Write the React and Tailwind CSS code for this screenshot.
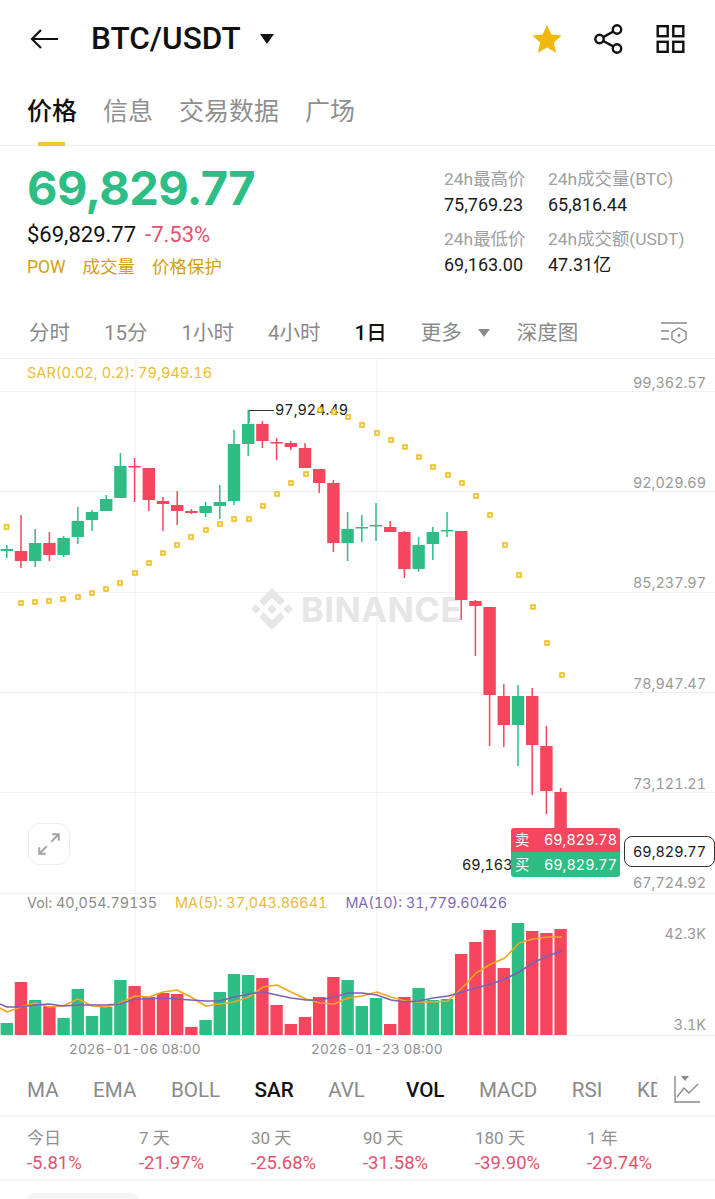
import React from "react";

const FONT = "font-['Roboto','Noto_Sans_CJK_SC',sans-serif]";
const UP = "#2ebd85";
const DOWN = "#f6465d";

// [bodyTop, bodyBottom, wickTop, wickBottom, volTop, up?]
const CANDLES = [
  [549, 551, 545, 558, 1023, 1],
  [551, 561, 515, 568, 982, 0],
  [543, 561, 529, 567, 1000, 1],
  [543, 555, 532, 561, 1006, 0],
  [538, 555, 536, 557, 1018, 1],
  [521, 537, 507, 544, 989, 1],
  [512, 520, 510, 531, 1016, 1],
  [499, 511, 495, 511, 1007, 1],
  [466, 498, 453, 498, 980, 1],
  [466, 467, 458, 502, 986, 0],
  [468, 500, 468, 511, 997, 0],
  [501, 504, 497, 531, 993, 0],
  [505, 511, 491, 525, 994, 0],
  [511, 513, 509, 514, 1027, 0],
  [506, 513, 502, 517, 1020, 1],
  [502, 506, 485, 519, 992, 1],
  [444, 501, 430, 505, 974, 1],
  [424, 444, 410, 456, 975, 1],
  [424, 441, 421, 448, 978, 0],
  [442, 443, 438, 460, 1005, 0],
  [443, 447, 441, 450, 1024, 0],
  [448, 468, 443, 468, 1017, 0],
  [469, 483, 469, 493, 997, 0],
  [483, 543, 480, 552, 977, 0],
  [529, 543, 512, 561, 980, 1],
  [527, 528, 515, 542, 1006, 1],
  [525, 526, 503, 541, 998, 1],
  [527, 532, 521, 532, 1024, 0],
  [532, 569, 531, 578, 997, 0],
  [545, 569, 537, 572, 988, 1],
  [532, 544, 527, 560, 1000, 1],
  [530, 531, 512, 537, 999, 1],
  [531, 600, 531, 620, 954, 0],
  [601, 606, 600, 656, 942, 0],
  [607, 695, 607, 746, 930, 0],
  [696, 725, 684, 747, 968, 0],
  [696, 725, 685, 766, 923, 1],
  [696, 745, 688, 795, 931, 0],
  [746, 791, 726, 814, 933, 0],
  [792, 835, 788, 835, 929, 0],
];

const SAR_DOTS = [
  [6.5, 527], [21, 603], [35, 602], [49, 601], [63, 599], [78, 597], [92, 593], [106, 589],
  [120, 583], [135, 573], [149, 563], [163, 553], [177, 545], [191, 537], [206, 530],
  [220, 524], [234, 519], [249, 519], [263, 506], [277, 494], [291, 483], [306, 474],
  [320, 410], [334, 412], [348, 417], [362, 425], [377, 433], [391, 440], [405, 447],
  [419, 457], [433, 467], [448, 475], [462, 483], [476, 496], [490, 515], [505, 545],
  [519, 575], [533, 607], [547, 643], [562, 675],
];

const MA5 =
  "0,1008 7,1012 21,1007 35,1003 49,1007 63,1006 78,999 92,1006 106,1007 120,1003 135,996 149,997 163,992 177,990 191,997 206,1006 220,1004 234,1002 249,997 263,987 277,985 291,992 306,999 320,1003 334,1004 348,998 362,996 377,992 391,997 405,1001 419,1002 433,1002 448,1001 462,988 476,973 491,964 505,958 519,943 533,939 547,937 562,937";
const MA10 =
  "0,1004 7,1007 21,1007 35,1005 49,1004 63,1006 78,1005 92,1005 106,1005 120,1004 135,999 149,999 163,998 177,999 191,1000 206,1001 220,1001 234,997 249,994 263,992 277,995 291,998 306,1000 320,1000 334,997 348,993 362,993 377,995 391,1000 405,1002 419,1001 433,998 448,996 462,992 476,988 491,984 505,979 519,972 533,963 547,956 562,951";

const GRID_Y = [391, 491, 592, 692, 792, 893, 1035];
const AXIS = [
  ["99,362.57", 388],
  ["92,029.69", 488],
  ["85,237.97", 588],
  ["78,947.47", 689],
  ["73,121.21", 789],
  ["67,724.92", 888],
  ["42.3K", 939],
  ["3.1K", 1030],
];

function Chart() {
  return (
    <svg viewBox="0 359 715 702" className="block w-[715px] h-[702px] font-['Inter',sans-serif] tabular-nums">
      {GRID_Y.map((y) => (
        <line key={y} x1="0" x2="715" y1={y + 0.5} y2={y + 0.5} stroke="#f0f0f0" />
      ))}
      {[135, 377].map((x) => (
        <line key={x} x1={x} x2={x} y1="359" y2="1035" stroke="#f0f0f0" />
      ))}

      {/* watermark */}
      <path
        transform="translate(251 588) scale(1.75)"
        fill="#e6e6e6"
        d="M16.624 13.9202l2.7175 2.7154-7.353 7.353-7.353-7.352 2.7175-2.7164 4.6355 4.6595 4.6356-4.6595zm4.6366-4.6366L24 12l-2.7154 2.7164L18.5682 12l2.6924-2.7164zm-9.272.001l2.7163 2.6914-2.7164 2.7174v-.001L9.2721 12l2.7164-2.7154zm-9.2722-.001L5.4088 12l-2.6914 2.6934L0 12l2.7164-2.7164zM11.9885.0115l7.353 7.329-2.7174 2.7154-4.6356-4.6356-4.6355 4.6595-2.7174-2.7154 7.353-7.353z"
      />
      <text x="301" y="622" fill="#e6e6e6" className="text-[34.5px] font-bold tracking-[0.5px]">
        BINANCE
      </text>

      {/* high marker */}
      <path d="M249 423V410.5H274" fill="none" stroke="#333" strokeWidth="1" />
      <text x="275" y="415" fill="#1a1a1a" className="text-[14.4px]">97,924.49</text>

      {/* candles */}
      {CANDLES.map(([top, bottom, wickTop, wickBottom, , up], i) => {
        const x = 6.8 + 14.2 * i;
        const color = up ? UP : DOWN;
        return (
          <g key={i} fill={color}>
            <rect x={x - 0.75} y={wickTop} width="1.5" height={wickBottom - wickTop} />
            <rect x={x - 6.2} y={top} width="12.4" height={Math.max(bottom - top, 1.5)} />
          </g>
        );
      })}

      {/* SAR dots */}
      {SAR_DOTS.map(([x, y]) => (
        <rect key={x} x={x - 2} y={y - 2} width="4" height="4" fill="#fff6c4" stroke="#efbf1f" strokeWidth="1.6" />
      ))}

      {/* volume */}
      {CANDLES.map(([, , , , volTop, up], i) => (
        <rect
          key={i}
          x={6.8 + 14.2 * i - 6.2}
          y={volTop}
          width="12.4"
          height={1035 - volTop}
          fill={up ? UP : DOWN}
        />
      ))}
      <polyline points={MA5} fill="none" stroke="#f0a818" strokeWidth="1.6" strokeLinejoin="round" />
      <polyline points={MA10} fill="none" stroke="#7e5fb8" strokeWidth="1.6" strokeLinejoin="round" />

      {/* axis */}
      {AXIS.map(([label, y]) => (
        <text key={label} x="706" y={y} textAnchor="end" fill="#9a9a9a" className="text-[14.4px]">
          {label}
        </text>
      ))}
      <text x="69" y="1054" fill="#8f8f8f" className="text-[13.7px]">2026-01-06 08:00</text>
      <text x="311" y="1054" fill="#8f8f8f" className="text-[13.7px]">2026-01-23 08:00</text>
      <text x="462" y="870" fill="#1a1a1a" className="text-[14.4px]">69,163</text>
    </svg>
  );
}

function PriceOverlays() {
  return (
    <>
      <div className="absolute left-[27px] top-[5px] text-[14.6px] leading-[18px] tabular-nums text-[#e9bd36] font-['Inter',sans-serif]">
        SAR(0.02, 0.2): 79,949.16
      </div>
      <div className="absolute left-[27px] top-[535px] flex gap-[18px] text-[14.4px] leading-[18px] tabular-nums font-['Inter',sans-serif]">
        <span className="text-[#8c8c8c]">Vol: 40,054.79135</span>
        <span className="text-[#e9b93a]">MA(5): 37,043.86641</span>
        <span className="text-[#7f6bb5]">MA(10): 31,779.60426</span>
      </div>

      {/* fullscreen */}
      <div className="absolute left-[28px] top-[464px] w-[42px] h-[42px] rounded-xl border border-[#eeeeee] bg-white flex items-center justify-center">
        <svg viewBox="0 0 24 24" className="w-[26px] h-[26px]" fill="none" stroke="#a3a3a3" strokeWidth="1.8">
          <path d="M14 10L21 3M15 3H21V9M10 14L3 21M3 15V21H9" />
        </svg>
      </div>

      {/* order box */}
      <div className="absolute left-[511px] top-[469px] w-[109px] rounded-[3px] overflow-hidden text-white text-[14.4px] tabular-nums font-['Inter','Noto_Sans_CJK_SC',sans-serif]">
        <div className="h-[24px] bg-[#f6465d] flex items-center justify-between pl-[4px] pr-[3px]">
          <span>卖</span>
          <span>69,829.78</span>
        </div>
        <div className="h-[25px] bg-[#2ebd85] flex items-center justify-between pl-[4px] pr-[3px]">
          <span>买</span>
          <span>69,829.77</span>
        </div>
      </div>

      {/* last price */}
      <div className="absolute left-[624px] top-[477px] w-[91px] h-[31px] rounded-lg border border-[#333333] bg-white flex items-center justify-center text-[14.4px] tabular-nums text-[#1a1a1a] font-['Inter',sans-serif]">
        69,829.77
      </div>
    </>
  );
}

function Stat({ label, value }) {
  return (
    <div className="flex flex-col gap-[6px]">
      <span className="text-[17.4px] leading-[19px] text-[#a0a0a0]">{label}</span>
      <span className="text-[18px] leading-[19px] text-[#1a1a1a]">{value}</span>
    </div>
  );
}

export default function App() {
  return (
    <div className={`w-[715px] h-[1199px] overflow-hidden bg-white ${FONT}`}>
      {/* top bar */}
      <div className="h-[78px] flex items-center pl-[30px] pr-[30px]">
        <svg viewBox="0 0 28 22" className="w-[28px] h-[22px]" fill="none" stroke="#111" strokeWidth="2.2">
          <path d="M28 11H2M11 2L2 11L11 20" />
        </svg>
        <span className="ml-[33px] text-[31.5px] font-medium text-[#111]">BTC/USDT</span>
        <svg viewBox="0 0 14 10" className="ml-[19px] w-[14px] h-[10px]" fill="#111">
          <path d="M0 0H14L7 10Z" />
        </svg>
        <svg viewBox="0 0 24 24" className="ml-auto w-[32px] h-[32px]" fill="#f0b90b">
          <path d="M12 1.5L15.2 8.6L23 9.4L17.2 14.6L18.8 22.3L12 18.4L5.2 22.3L6.8 14.6L1 9.4L8.8 8.6Z" />
        </svg>
        <svg viewBox="0 0 32 32" className="ml-[30px] w-[32px] h-[32px]" fill="none" stroke="#111" strokeWidth="2.4">
          <circle cx="24" cy="6.5" r="4.2" />
          <circle cx="24" cy="25.5" r="4.2" />
          <circle cx="6.5" cy="16" r="4.2" />
          <path d="M10.3 14L20.2 8.6M10.3 18L20.2 23.4" />
        </svg>
        <svg viewBox="0 0 28 28" className="ml-[31px] w-[29px] h-[28px]" fill="none" stroke="#111" strokeWidth="2.4">
          <rect x="1.2" y="1.2" width="10" height="10" />
          <rect x="16.8" y="1.2" width="10" height="10" />
          <rect x="1.2" y="16.8" width="10" height="10" />
          <rect x="16.8" y="16.8" width="10" height="10" />
        </svg>
      </div>

      {/* section tabs */}
      <div className="h-[68px] border-b border-[#efefef] flex items-start gap-[26px] pl-[27px] pt-[16px] text-[25px] leading-[36px] text-[#8f8f8f]">
        <div className="relative h-[52px] font-medium text-[#111]">
          价格
          <div className="absolute left-[11px] bottom-0 w-[27px] h-[4px] bg-[#f0c92e]" />
        </div>
        <span>信息</span>
        <span>交易数据</span>
        <span>广场</span>
      </div>

      {/* price summary */}
      <div className="h-[164px] flex pl-[27px] pr-[27px] pt-[15px]">
        <div className="flex-1">
          <div className="text-[47px] leading-[54px] font-bold text-[#2ebd85] font-['Inter',sans-serif] tracking-[-0.6px]">
            69,829.77
          </div>
          <div className="mt-[7px] flex gap-[9px] text-[22px] leading-[26px]">
            <span className="text-[#111]">$69,829.77</span>
            <span className="text-[#e5516d]">-7.53%</span>
          </div>
          <div className="mt-[7px] flex gap-[17px] text-[17.5px] leading-[24px] text-[#d2a00f]">
            <span>POW</span>
            <span>成交量</span>
            <span>价格保护</span>
          </div>
        </div>
        <div className="grid grid-cols-[104px_140px] gap-y-[15px] pt-[9px] h-[114px]">
          <Stat label="24h最高价" value="75,769.23" />
          <Stat label="24h成交量(BTC)" value="65,816.44" />
          <Stat label="24h最低价" value="69,163.00" />
          <Stat label="24h成交额(USDT)" value="47.31亿" />
        </div>
      </div>

      {/* interval tabs */}
      <div className="h-[49px] border-b border-[#f2f2f2] flex items-center pl-[29px] pr-[28px] pb-[2px] text-[20.5px] text-[#8a8a8a]">
        <div className="flex items-center gap-[34px]">
          <span>分时</span>
          <span>15分</span>
          <span>1小时</span>
          <span>4小时</span>
          <span className="text-[#111] font-medium">1日</span>
          <span className="flex items-center gap-[16px]">
            更多
            <svg viewBox="0 0 12 8" className="w-[12px] h-[8px]" fill="#8a8a8a">
              <path d="M0 0H12L6 8Z" />
            </svg>
          </span>
        </div>
        <span className="ml-[27px]">深度图</span>
        <svg viewBox="0 0 26 22" className="ml-auto w-[26px] h-[22px]" fill="none" stroke="#8a8a8a" strokeWidth="1.4">
          <path d="M0 1H26M0 9H8M0 17H8" />
          <path d="M18 6L25 10V17L18 21L11 17V10Z" />
          <circle cx="18" cy="13.5" r="1.4" fill="#8a8a8a" stroke="none" />
        </svg>
      </div>

      {/* chart */}
      <div className="relative h-[702px]">
        <Chart />
        <PriceOverlays />
      </div>

      {/* indicator tabs */}
      <div className="h-[56px] border-b-2 border-[#f5f5f5] flex items-center pl-[27px] pt-[3px] text-[20.6px] text-[#8a8a8a]">
        <div className="w-[631px] h-[26px] overflow-hidden border-r border-[#eeeeee] flex items-center gap-[34.5px] leading-[26px]">
          <span>MA</span>
          <span>EMA</span>
          <span>BOLL</span>
          <span className="font-medium text-[#111]">SAR</span>
          <span>AVL</span>
          <span className="w-px h-[26px] -mx-[14px] bg-[#e6e6e6]" />
          <span className="font-medium text-[#111]">VOL</span>
          <span>MACD</span>
          <span>RSI</span>
          <span>KDJ</span>
        </div>
        <svg viewBox="0 0 26 30" className="ml-[16px] w-[26px] h-[30px]" fill="none" stroke="#8a8a8a" strokeWidth="1.4">
          <path d="M1 1V27H26" />
          <path d="M3 22L10 13L15 18L24 9" />
          <path d="M7 1H15L11 6Z" fill="#8a8a8a" stroke="none" />
        </svg>
      </div>

      {/* performance */}
      <div className="h-[64px] border-b-2 border-[#f3f3f3] flex items-start pl-[27px] pt-[10px]">
        {[
          ["今日", "-5.81%"],
          ["7 天", "-21.97%"],
          ["30 天", "-25.68%"],
          ["90 天", "-31.58%"],
          ["180 天", "-39.90%"],
          ["1 年", "-29.74%"],
        ].map(([label, value]) => (
          <div key={label} className="w-[112px] flex flex-col gap-[3px]">
            <span className="text-[17px] leading-[22px] text-[#8f8f8f]">{label}</span>
            <span className="text-[18.5px] leading-[22px] text-[#e5516d]">{value}</span>
          </div>
        ))}
      </div>

      <div className="mt-[12px] ml-[27px] w-[112px] h-[20px] rounded-t-lg bg-[#f5f5f5]" />
    </div>
  );
}
